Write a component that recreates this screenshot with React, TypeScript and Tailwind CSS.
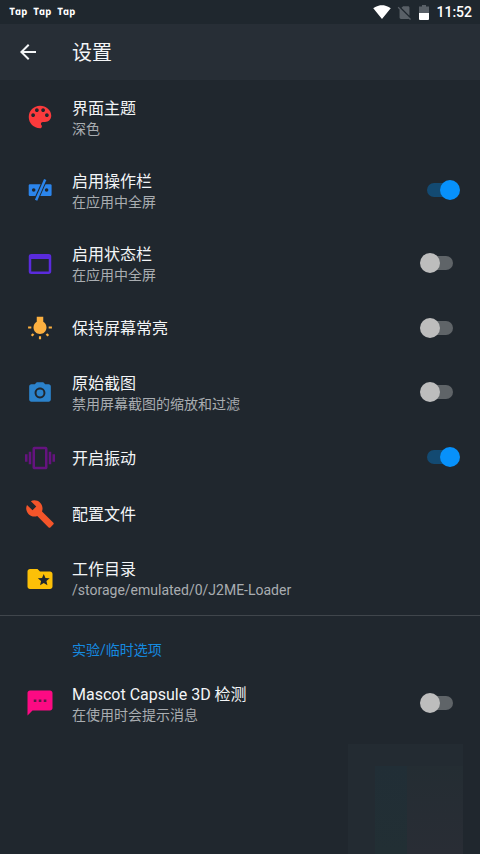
import React from 'react';
import {
  MdArrowBack,
  MdBuild,
  MdCameraAlt,
  MdFolderSpecial,
  MdSignalCellularNoSim,
  MdSignalWifi4Bar,
  MdVibration,
  MdWbIncandescent,
  MdWebAsset,
} from 'react-icons/md';

type RowProps = {
  icon: React.ReactNode;
  title: string;
  summary?: string;
  checked?: boolean;
  className: string;
};

const Switch: React.FC<{ checked: boolean }> = ({ checked }) => (
  <div
    className={
      checked
        ? 'mb-px mr-[27px] flex h-3.5 w-[26px] items-center justify-end rounded-full bg-[#134a72]'
        : 'mb-px mr-[27px] flex h-3.5 w-[26px] items-center rounded-full bg-[#5f6468]'
    }
  >
    <div
      className={
        checked
          ? '-mr-[7px] size-5 shrink-0 rounded-full bg-[#0791fb]'
          : '-ml-[7px] size-5 shrink-0 rounded-full bg-[#bdbdbd]'
      }
    />
  </div>
);

const Row: React.FC<RowProps> = ({ icon, title, summary, checked, className }) => (
  <div className={`flex items-center ${className}`}>
    <div className="flex w-20 shrink-0 justify-center text-[30px]">{icon}</div>
    <div className="-ml-2 min-w-0 flex-1">
      <div className="pt-0.5 text-base leading-[22px] text-[#f3f5f7]">{title}</div>
      {summary && <div className="-mt-px text-sm leading-5 text-[#a9adb1]">{summary}</div>}
    </div>
    {checked !== undefined && <Switch checked={checked} />}
  </div>
);

const PaletteIcon: React.FC = () => (
  <svg className="size-[30px] text-[#fb3a3c]" viewBox="0 0 24 24" fill="currentColor">
    <path d="M12 3c-4.970 0-9 4.030-9 9s4.030 9 9 9c.83 0 1.500-.67 1.500-1.500 0-.39-.15-.74-.39-1.010-.23-.26-.38-.61-.38-.99 0-.83.67-1.500 1.500-1.500H16c2.760 0 5-2.240 5-5 0-4.420-4.030-8-9-8zm-5.500 9c-.83 0-1.500-.67-1.500-1.500S5.670 9 6.500 9 8 9.670 8 10.500 7.330 12 6.500 12zm3-4C8.670 8 8 7.330 8 6.500S8.670 5 9.500 5s1.500.67 1.500 1.500S10.330 8 9.500 8zm5 0c-.83 0-1.500-.67-1.500-1.500S13.670 5 14.500 5s1.500.67 1.500 1.500S15.330 8 14.500 8zm3 4c-.83 0-1.500-.67-1.500-1.500S16.670 9 17.500 9s1.500.67 1.500 1.500-.67 1.500-1.500 1.500z" />
  </svg>
);

// 操作栏图标：带圆点的横条，中间有斜线
const ActionBarIcon: React.FC = () => (
  <svg className="mb-px size-[30px] text-[#2b85ec]" viewBox="0 0 30 30" fill="currentColor">
    <rect x="3.700" y="9.200" width="22.900" height="11.800" rx="1.300" />
    <circle cx="8.700" cy="15" r="1.800" fill="#20272e" />
    <circle cx="21.600" cy="15" r="1.800" fill="#20272e" />
    <path d="M10.200 27 20.800 3" stroke="#20272e" strokeWidth="4.400" />
    <path d="M11.100 25.300 20.200 4.400" stroke="currentColor" strokeWidth="2.500" />
  </svg>
);

const MessageIcon: React.FC = () => (
  <svg className="size-[30px] text-[#fc0a83]" viewBox="0 0 24 24">
    <path fill="currentColor" d="M20 2H4c-1.100 0-1.990.9-1.990 2L2 22l4-4h14c1.100 0 2-.9 2-2V4c0-1.100-.9-2-2-2z" />
    <path fill="#5c1a49" d="M7 9.200h2.100v1.900H7zM11 9.200h2.100v1.900H11zM15 9.200h2.100v1.900H15z" />
  </svg>
);

const BatteryIcon: React.FC = () => (
  <svg className="mr-[7px] h-[15px] w-2.5" viewBox="0 0 10 15">
    <path fill="#596067" d="M3 0h4v1.500h3V8H0V1.500h3z" />
    <path fill="#fff" d="M0 8h10v6a1 1 0 0 1-1 1H1a1 1 0 0 1-1-1z" />
  </svg>
);

const App: React.FC = () => {
  return (
    <div className="flex h-[854px] w-[480px] flex-col overflow-hidden bg-[#20272e] font-['Roboto','Noto_Sans_CJK_SC',sans-serif]">
      {/* 状态栏 */}
      <div className="flex h-6 shrink-0 items-center justify-between bg-[#1f272e] pl-[9px] pr-2 text-white">
        <div className="flex pb-0.5 font-['Open_Sans'] text-[10px] font-bold italic leading-[22px]">
          <span className="w-6 origin-left scale-x-105 skew-x-12">Tap</span>
          <span className="w-6 origin-left scale-x-105 skew-x-12">Tap</span>
          <span className="w-6 origin-left scale-x-105 skew-x-12">Tap</span>
        </div>
        <div className="flex items-center">
          <MdSignalWifi4Bar className="mr-[5px] size-[18px]" />
          <MdSignalCellularNoSim className="mr-1.5 size-[17px] text-[#596067]" />
          <BatteryIcon />
          <span className="text-sm font-medium leading-6">11:52</span>
        </div>
      </div>

      {/* 标题栏 */}
      <header className="flex h-14 shrink-0 items-center bg-[#272e36] text-[#f3f5f7]">
        <div className="w-[72px] pl-4">
          <MdArrowBack className="size-6" />
        </div>
        <h1 className="pt-0.5 text-xl leading-7">设置</h1>
      </header>

      {/* 设置列表 */}
      <main className="flex flex-col">
        <Row className="h-[74px]" icon={<PaletteIcon />} title="界面主题" summary="深色" />
        <Row className="h-[73px]" icon={<ActionBarIcon />} title="启用操作栏" summary="在应用中全屏" checked />
        <Row
          className="h-[73px]"
          icon={<MdWebAsset className="text-[#5a2bdc]" />}
          title="启用状态栏"
          summary="在应用中全屏"
          checked={false}
        />
        <Row
          className="h-14"
          icon={<MdWbIncandescent className="size-[26px] text-[#fcb040]" />}
          title="保持屏幕常亮"
          checked={false}
        />
        <Row
          className="h-[73px]"
          icon={<MdCameraAlt className="size-[26px] text-[#2b82cb]" />}
          title="原始截图"
          summary="禁用屏幕截图的缩放和过滤"
          checked={false}
        />
        <Row className="h-[57px]" icon={<MdVibration className="text-[#65137f]" />} title="开启振动" checked />
        <Row className="h-14" icon={<MdBuild className="text-[#f4552a]" />} title="配置文件" />
        <Row
          className="h-[73px]"
          icon={<MdFolderSpecial className="text-[#fcc007]" />}
          title="工作目录"
          summary="/storage/emulated/0/J2ME-Loader"
        />
        <div className="border-t border-[#40464c] pb-1.5 pl-[72px] pt-6 text-sm leading-5 text-[#158ae0]">
          实验/临时选项
        </div>
        <Row
          className="h-[74px]"
          icon={<MessageIcon />}
          title="Mascot Capsule 3D 检测"
          summary="在使用时会提示消息"
          checked={false}
        />
      </main>

      {/* 右下角淡色水印 */}
      <div className="mr-[17px] mt-auto flex h-[110px] w-[115px] shrink-0 self-end bg-[#232b32] pl-[27px] pt-[22px]">
        <div className="w-8 bg-linear-to-b from-[#212e36] to-[#222f34]" />
        <div className="flex-1 bg-linear-to-b from-[#242d33] to-[#292d35]" />
      </div>
    </div>
  );
};

export default App;
